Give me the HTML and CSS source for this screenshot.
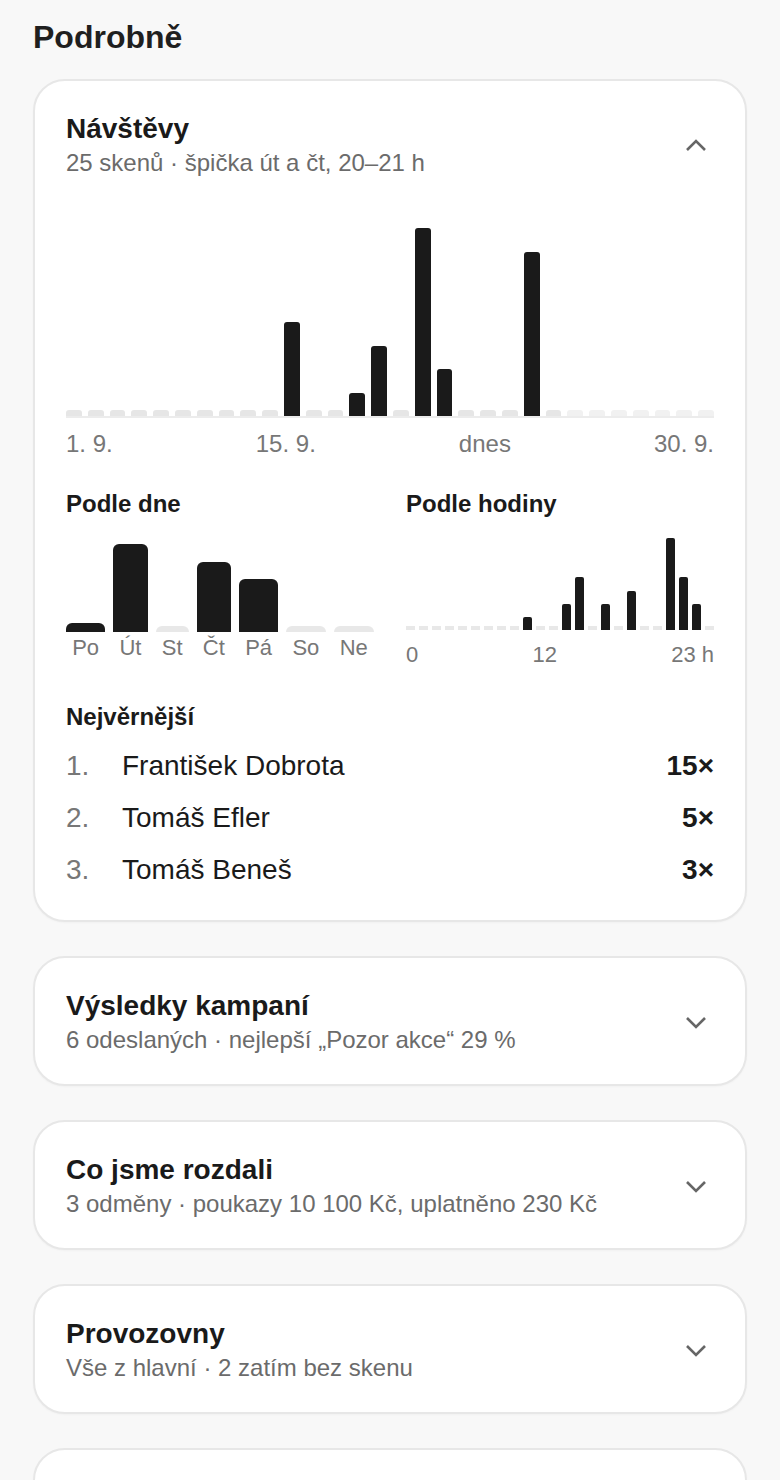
FILE: index.html
```html
<!DOCTYPE html>
<html lang="cs">
<head>
<meta charset="utf-8">
<title>Podrobně</title>
<link rel="stylesheet" href="styles.css">
</head>
<body>
<h1 class="page-title">Podrobně</h1>

<section class="card card-open">
  <div class="card-head">
    <div class="head-text">
      <h2 class="card-title">Návštěvy</h2>
      <p class="card-sub">25 skenů · špička út a čt, 20–21 h</p>
    </div>
    <span class="chev"><svg width="24" height="24" viewBox="0 0 24 24"><polyline points="3,17 12,8 21,17" fill="none" stroke="#666" stroke-width="2.6"/></svg></span>
  </div>

  <div class="month-chart">
    <div class="slot"><div class="stub"></div></div>
    <div class="slot"><div class="stub"></div></div>
    <div class="slot"><div class="stub"></div></div>
    <div class="slot"><div class="stub"></div></div>
    <div class="slot"><div class="stub"></div></div>
    <div class="slot"><div class="stub"></div></div>
    <div class="slot"><div class="stub"></div></div>
    <div class="slot"><div class="stub"></div></div>
    <div class="slot"><div class="stub"></div></div>
    <div class="slot"><div class="stub"></div></div>
    <div class="slot"><div class="bar" style="height:94px"></div></div>
    <div class="slot"><div class="stub"></div></div>
    <div class="slot"><div class="stub"></div></div>
    <div class="slot"><div class="bar" style="height:23.5px"></div></div>
    <div class="slot"><div class="bar" style="height:70.5px"></div></div>
    <div class="slot"><div class="stub"></div></div>
    <div class="slot"><div class="bar" style="height:188px"></div></div>
    <div class="slot"><div class="bar" style="height:47px"></div></div>
    <div class="slot"><div class="stub"></div></div>
    <div class="slot"><div class="stub"></div></div>
    <div class="slot"><div class="stub"></div></div>
    <div class="slot"><div class="bar" style="height:164.5px"></div></div>
    <div class="slot"><div class="stub"></div></div>
    <div class="slot"><div class="stub future"></div></div>
    <div class="slot"><div class="stub future"></div></div>
    <div class="slot"><div class="stub future"></div></div>
    <div class="slot"><div class="stub future"></div></div>
    <div class="slot"><div class="stub future"></div></div>
    <div class="slot"><div class="stub future"></div></div>
    <div class="slot"><div class="stub future"></div></div>
  </div>
  <div class="axis axis-month">
    <span>1. 9.</span><span>15. 9.</span><span>dnes</span><span>30. 9.</span>
  </div>

  <div class="split">
    <div class="split-col">
      <h3 class="sec-title">Podle dne</h3>
      <div class="day-chart">
        <div class="day"><div class="day-area"><div class="day-bar" style="height:8.8px"></div></div><span class="day-label">Po</span></div>
        <div class="day"><div class="day-area"><div class="day-bar" style="height:88px"></div></div><span class="day-label">Út</span></div>
        <div class="day"><div class="day-area"><div class="day-stub"></div></div><span class="day-label">St</span></div>
        <div class="day"><div class="day-area"><div class="day-bar" style="height:70.4px"></div></div><span class="day-label">Čt</span></div>
        <div class="day"><div class="day-area"><div class="day-bar" style="height:52.8px"></div></div><span class="day-label">Pá</span></div>
        <div class="day"><div class="day-area"><div class="day-stub"></div></div><span class="day-label">So</span></div>
        <div class="day"><div class="day-area"><div class="day-stub"></div></div><span class="day-label">Ne</span></div>
      </div>
    </div>
    <div class="split-col">
      <h3 class="sec-title">Podle hodiny</h3>
      <div class="hour-chart">
        <div class="hslot"><div class="hstub"></div></div>
        <div class="hslot"><div class="hstub"></div></div>
        <div class="hslot"><div class="hstub"></div></div>
        <div class="hslot"><div class="hstub"></div></div>
        <div class="hslot"><div class="hstub"></div></div>
        <div class="hslot"><div class="hstub"></div></div>
        <div class="hslot"><div class="hstub"></div></div>
        <div class="hslot"><div class="hstub"></div></div>
        <div class="hslot"><div class="hstub"></div></div>
        <div class="hslot"><div class="hbar" style="height:13.1px"></div></div>
        <div class="hslot"><div class="hstub"></div></div>
        <div class="hslot"><div class="hstub"></div></div>
        <div class="hslot"><div class="hbar" style="height:26.3px"></div></div>
        <div class="hslot"><div class="hbar" style="height:52.6px"></div></div>
        <div class="hslot"><div class="hstub"></div></div>
        <div class="hslot"><div class="hbar" style="height:26.3px"></div></div>
        <div class="hslot"><div class="hstub"></div></div>
        <div class="hslot"><div class="hbar" style="height:39.4px"></div></div>
        <div class="hslot"><div class="hstub"></div></div>
        <div class="hslot"><div class="hstub"></div></div>
        <div class="hslot"><div class="hbar" style="height:92px"></div></div>
        <div class="hslot"><div class="hbar" style="height:52.6px"></div></div>
        <div class="hslot"><div class="hbar" style="height:26.3px"></div></div>
        <div class="hslot"><div class="hstub"></div></div>
      </div>
      <div class="axis axis-hour">
        <span>0</span><span>12</span><span>23 h</span>
      </div>
    </div>
  </div>

  <h3 class="sec-title loyal-title">Nejvěrnější</h3>
  <ol class="loyal">
    <li class="row"><span class="rank">1.</span><span class="name">František Dobrota</span><span class="count">15×</span></li>
    <li class="row"><span class="rank">2.</span><span class="name">Tomáš Efler</span><span class="count">5×</span></li>
    <li class="row"><span class="rank">3.</span><span class="name">Tomáš Beneš</span><span class="count">3×</span></li>
  </ol>
</section>

<section class="card">
  <div class="card-head">
    <div class="head-text">
      <h2 class="card-title">Výsledky kampaní</h2>
      <p class="card-sub">6 odeslaných · nejlepší „Pozor akce“ 29 %</p>
    </div>
    <span class="chev"><svg width="24" height="24" viewBox="0 0 24 24"><polyline points="3,8 12,17 21,8" fill="none" stroke="#666" stroke-width="2.6"/></svg></span>
  </div>
</section>

<section class="card">
  <div class="card-head">
    <div class="head-text">
      <h2 class="card-title">Co jsme rozdali</h2>
      <p class="card-sub">3 odměny · poukazy 10 100 Kč, uplatněno 230 Kč</p>
    </div>
    <span class="chev"><svg width="24" height="24" viewBox="0 0 24 24"><polyline points="3,8 12,17 21,8" fill="none" stroke="#666" stroke-width="2.6"/></svg></span>
  </div>
</section>

<section class="card">
  <div class="card-head">
    <div class="head-text">
      <h2 class="card-title">Provozovny</h2>
      <p class="card-sub">Vše z hlavní · 2 zatím bez skenu</p>
    </div>
    <span class="chev"><svg width="24" height="24" viewBox="0 0 24 24"><polyline points="3,8 12,17 21,8" fill="none" stroke="#666" stroke-width="2.6"/></svg></span>
  </div>
</section>

<section class="card card-empty"></section>
</body>
</html>
```

FILE: styles.css
```css
* {
  box-sizing: border-box;
  margin: 0;
  padding: 0;
}

body {
  background: #f8f8f8;
  font-family: "Liberation Sans", Arial, sans-serif;
  color: #1a1a1a;
  padding: 18px 33px 40px;
}

.page-title {
  font-size: 32px;
  font-weight: 700;
  line-height: 38px;
  color: #1f1f1f;
}

.card {
  background: #fff;
  border: 2px solid #e7e7e7;
  border-radius: 32px;
  padding: 32px 31px 30px;
  margin-top: 34px;
  box-shadow: 0 1px 2px rgba(0, 0, 0, 0.03);
}

.page-title + .card {
  margin-top: 23px;
}

.card-open {
  padding-bottom: 24px;
}

.card-empty {
  height: 130px;
}

.card-head {
  display: flex;
  align-items: center;
}

.head-text {
  flex: 1;
}

.card-title {
  font-size: 28px;
  line-height: 32px;
  font-weight: 700;
  color: #1a1a1a;
}

.card-sub {
  font-size: 24px;
  line-height: 28px;
  margin-top: 4px;
  color: #6b6b6b;
}

.chev {
  width: 36px;
  height: 36px;
  display: flex;
  align-items: center;
  justify-content: center;
}

.month-chart {
  margin-top: 49px;
  height: 192px;
  border-bottom: 2px solid #ececec;
  display: flex;
  align-items: flex-end;
  gap: 6px;
}

.slot {
  flex: 1;
  display: flex;
  align-items: flex-end;
}

.bar {
  width: 100%;
  background: #1a1a1a;
  border-radius: 3px 3px 0 0;
}

.stub {
  width: 100%;
  height: 6px;
  background: #e6e6e6;
  border-radius: 3px 3px 0 0;
}

.stub.future {
  background: #f1f1f1;
}

.axis {
  display: flex;
  justify-content: space-between;
  color: #777;
}

.axis-month {
  margin-top: 12px;
  font-size: 24px;
  line-height: 28px;
}

.split {
  margin-top: 32px;
  display: grid;
  grid-template-columns: 1fr 1fr;
  gap: 32px;
}

.sec-title {
  font-size: 24px;
  line-height: 28px;
  font-weight: 700;
  color: #1a1a1a;
}

.day-chart {
  margin-top: 12px;
  display: flex;
  gap: 8px;
}

.day {
  flex: 1 1 auto;
  display: flex;
  flex-direction: column;
}

.day-area {
  height: 102px;
  display: flex;
  align-items: flex-end;
}

.day-bar {
  width: 100%;
  background: #1a1a1a;
  border-radius: 6px 6px 0 0;
}

.day-stub {
  width: 100%;
  height: 6px;
  background: #e8e8e8;
  border-radius: 6px 6px 0 0;
}

.day-label {
  margin-top: 3px;
  font-size: 22px;
  line-height: 25px;
  text-align: center;
  color: #777;
}

.hour-chart {
  margin-top: 12px;
  height: 100px;
  display: flex;
  align-items: flex-end;
  gap: 4px;
}

.hslot {
  flex: 1;
  display: flex;
  align-items: flex-end;
}

.hbar {
  width: 100%;
  background: #1a1a1a;
  border-radius: 2px 2px 0 0;
}

.hstub {
  width: 100%;
  height: 4px;
  background: #e8e8e8;
}

.axis-hour {
  margin-top: 12px;
  font-size: 22px;
  line-height: 25px;
}

.loyal-title {
  margin-top: 36px;
}

.loyal {
  list-style: none;
  margin-top: 9px;
}

.row {
  display: flex;
  font-size: 28px;
  line-height: 52px;
}

.rank {
  width: 56px;
  color: #777;
}

.name {
  flex: 1;
  color: #1a1a1a;
}

.count {
  font-weight: 700;
  color: #1a1a1a;
}
```
